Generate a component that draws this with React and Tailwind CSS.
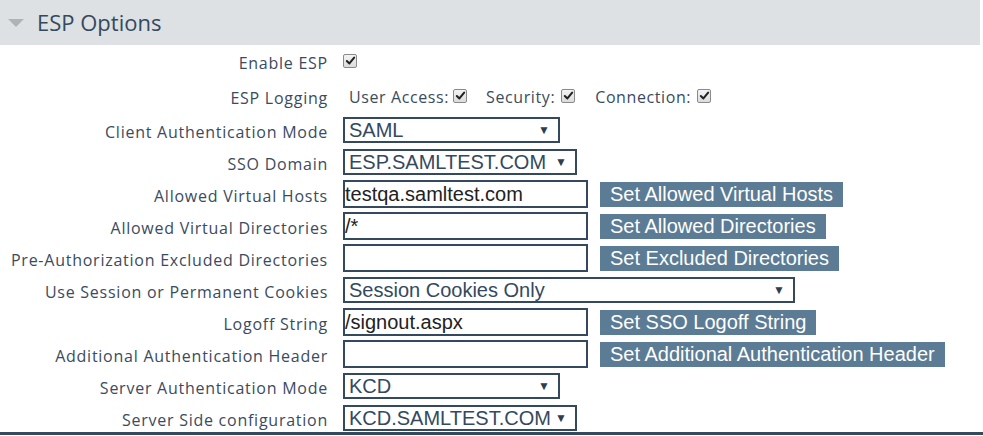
import React from 'react';

const Check = () => (
    <span className="inline-flex items-center justify-center w-[14px] h-[14px] border border-[#8a8a8a] rounded-[2px] bg-gradient-to-b from-[#f4f4f4] to-[#dcdcdc] align-middle">
        <svg viewBox="0 0 12 12" className="w-[11px] h-[11px]">
            <path d="M2 6.5 L4.8 9.2 L10 2.8" fill="none" stroke="#222" strokeWidth="2.2" strokeLinecap="round" strokeLinejoin="round" />
        </svg>
    </span>
);

const Select = ({ value, width }) => (
    <div className={`flex items-center justify-between h-[26px] border-2 border-[#34495e] pl-[4px] pr-[8px] text-[20px] text-[#34495e] leading-none ${width}`}>
        <span>{value}</span>
        <span className="text-[12px] text-[#2c3e50]">▼</span>
    </div>
);

const TextBox = ({ value }) => (
    <div className="flex items-center w-[245px] h-[28px] border-2 border-[#34495e] text-[20px] text-[#222] leading-none">
        {value}
    </div>
);

const Btn = ({ children }) => (
    <div className="ml-[12px] h-[25px] flex items-center px-[10px] bg-[#5b7c94] text-white text-[20px] leading-none">
        {children}
    </div>
);

const Row = ({ label, children, className = 'h-[32px]', labelPad = 'pt-[4px]' }) => (
    <div className={`flex items-center ${className}`}>
        <div className={`w-[328px] text-right text-[16px] tracking-[0.75px] text-[#3b4b5e] ${labelPad}`} style={{ fontFamily: '"Open Sans", sans-serif' }}>
            {label}
        </div>
        <div className="ml-[15px] flex items-center" style={{ fontFamily: '"Liberation Sans", Arial, sans-serif' }}>
            {children}
        </div>
    </div>
);

export default function App() {
    return (
        <div className="w-[983px] h-[436px] bg-white overflow-hidden relative">
            <div className="h-[45px] bg-[#dde1e3] mr-[3px] flex items-center">
                <svg viewBox="0 0 16 10" className="ml-[8px] w-[16px] h-[10px]">
                    <path d="M0 1 L16 1 L8 9 Z" fill="#aeb3b8" />
                </svg>
                <span className="ml-[13px] text-[22px] text-[#34495e]" style={{ fontFamily: '"Open Sans", sans-serif' }}>ESP Options</span>
            </div>

            <div className="pt-[3px]">
                <Row label="Enable ESP" className="h-[30px] mb-[4px]" labelPad="">
                    <span className="-mt-[6px]"><Check /></span>
                </Row>
                <Row label="ESP Logging" labelPad="">
                    <div className="flex items-center text-[16px] tracking-[0.6px] text-[#3b4b5e] ml-[6px] -mt-[2px]" style={{ fontFamily: '"Open Sans", sans-serif' }}>
                        <span>User Access:</span>
                        <span className="ml-[4px] -mt-[6px]"><Check /></span>
                        <span className="ml-[19px]">Security:</span>
                        <span className="ml-[6px] -mt-[6px]"><Check /></span>
                        <span className="ml-[20px]">Connection:</span>
                        <span className="ml-[6px] -mt-[6px]"><Check /></span>
                    </div>
                </Row>
                <Row label="Client Authentication Mode">
                    <Select value="SAML" width="w-[217px]" />
                </Row>
                <Row label="SSO Domain">
                    <Select value="ESP.SAMLTEST.COM" width="w-[234px]" />
                </Row>
                <Row label="Allowed Virtual Hosts">
                    <TextBox value="testqa.samltest.com" />
                    <Btn>Set Allowed Virtual Hosts</Btn>
                </Row>
                <Row label="Allowed Virtual Directories">
                    <TextBox value="/*" />
                    <Btn>Set Allowed Directories</Btn>
                </Row>
                <Row label="Pre-Authorization Excluded Directories">
                    <TextBox value="" />
                    <Btn>Set Excluded Directories</Btn>
                </Row>
                <Row label="Use Session or Permanent Cookies">
                    <Select value="Session Cookies Only" width="w-[452px]" />
                </Row>
                <Row label="Logoff String">
                    <TextBox value="/signout.aspx" />
                    <Btn>Set SSO Logoff String</Btn>
                </Row>
                <Row label="Additional Authentication Header">
                    <TextBox value="" />
                    <Btn>Set Additional Authentication Header</Btn>
                </Row>
                <Row label="Server Authentication Mode">
                    <Select value="KCD" width="w-[217px]" />
                </Row>
                <Row label="Server Side configuration">
                    <Select value="KCD.SAMLTEST.COM" width="w-[234px]" />
                </Row>
            </div>
            <div className="absolute left-0 right-0 top-[432px] h-[3px] bg-[#34495e]" />
        </div>
    );
}
